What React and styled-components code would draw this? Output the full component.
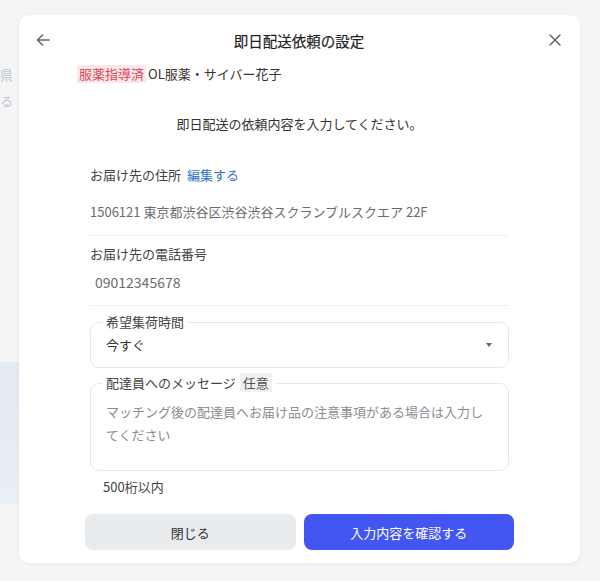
import React from 'react';
import styled, { createGlobalStyle } from 'styled-components';

const GlobalStyle = createGlobalStyle`
  body {
    margin: 0;
    background: #f4f5f7;
    font-family: "Noto Sans CJK JP", "Noto Sans", sans-serif;
    color: #333;
  }
`;

const Page = styled.div`
  position: relative;
  width: 600px;
  height: 581px;
  overflow: hidden;
  background: #f4f5f7;
`;

const Behind = styled.div`
  display: flex;
  flex-direction: column;
  padding-top: 66px;
  width: 40px;
  color: #c4c7cc;
  font-size: 13px;
  line-height: 18px;
`;

const BehindLine = styled.div`
  white-space: nowrap;
  margin-bottom: 8px;
`;

const BehindCard = styled.div`
  margin-top: 244px;
  width: 19px;
  height: 142px;
  background: linear-gradient(180deg, #e2ebf2, #e8eff5);
`;

const Modal = styled.div`
  position: absolute;
  left: 19px;
  top: 15px;
  width: 561px;
  height: 548px;
  background: #fff;
  border-radius: 10px;
  box-shadow: 0 1px 4px rgba(0, 0, 0, 0.06);
  display: flex;
  flex-direction: column;
`;

const Header = styled.div`
  height: 50px;
  display: grid;
  grid-template-columns: 1fr auto 1fr;
  align-items: center;
  padding: 0 18px 0 17px;
`;

const IconButton = styled.button`
  border: none;
  background: none;
  padding: 0;
  display: flex;
  justify-self: ${p => (p.$end ? 'end' : 'start')};
  color: #666;
`;

const Title = styled.h1`
  margin: 0;
  font-size: 14.5px;
  font-weight: 400;
  color: #1f1f1f;
  -webkit-text-stroke: 0.2px #1f1f1f;
`;

const PatientRow = styled.div`
  display: flex;
  align-items: center;
  padding-left: 58px;
  height: 18px;
  font-size: 13px;
  line-height: 18px;
  color: #333;
`;

const Tag = styled.span`
  background: #fde7e9;
  color: #d9485a;
  padding: 0 2px;
  margin-right: 2px;
`;

const Subtitle = styled.p`
  margin: 31px 0 0;
  text-align: center;
  font-size: 13px;
  line-height: 20px;
  color: #333;
`;

const Body = styled.div`
  display: flex;
  flex-direction: column;
  padding: 0 71px;
  margin-top: 31px;
`;

const Label = styled.div`
  font-size: 13px;
  line-height: 20px;
  color: #444;
`;

const EditLink = styled.a`
  color: #2f72c4;
  margin-left: 6px;
`;

const Value = styled.div`
  margin-top: ${p => p.$gap}px;
  padding-left: ${p => p.$indent || 0}px;
  font-size: ${p => p.$size || 13}px;
  line-height: 20px;
  color: #6b6b6b;
`;

const Divider = styled.hr`
  border: none;
  border-top: 1px solid #eef0f2;
  margin: 13px 0 ${p => p.$after}px;
`;

const Field = styled.fieldset`
  margin: 0;
  border: 1px solid #e6e8eb;
  border-radius: 9px;
  padding: 0 15px ${p => p.$bottom}px;
  margin-bottom: 6px;
  min-width: 0;
`;

const Legend = styled.legend`
  font-size: 13px;
  line-height: 18px;
  padding: 0 4px;
  margin-left: -4px;
  color: #444;
`;

const Optional = styled.span`
  background: #f0f1f3;
  color: #555;
  padding: 0 3px;
  margin-left: 4px;
`;

const SelectRow = styled.div`
  display: flex;
  align-items: center;
  justify-content: space-between;
  margin-top: 4px;
  font-size: 13px;
  line-height: 20px;
  color: #333;
`;

const Caret = styled.span`
  width: 0;
  height: 0;
  border-left: 3.5px solid transparent;
  border-right: 3.5px solid transparent;
  border-top: 4px solid #666;
  margin-right: 1px;
`;

const TextArea = styled.textarea`
  display: block;
  width: 100%;
  box-sizing: border-box;
  margin-top: 8px;
  height: 70px;
  border: none;
  outline: none;
  resize: none;
  padding: 0;
  font-family: inherit;
  font-size: 13px;
  line-height: 23px;
  color: #333;
  &::placeholder {
    color: #8a8d91;
  }
`;

const Counter = styled.div`
  padding-left: 13px;
  font-size: 13px;
  line-height: 20px;
  color: #444;
`;

const Actions = styled.div`
  display: grid;
  grid-template-columns: 1fr 1fr;
  gap: 8px;
  padding: 0 66px;
  margin-top: 17px;
`;

const Button = styled.button`
  height: 36px;
  border: none;
  border-radius: 8px;
  font-family: inherit;
  font-size: 13px;
  background: ${p => (p.$primary ? '#4456f2' : '#e9ecef')};
  color: ${p => (p.$primary ? '#fff' : '#333')};
`;

const ArrowLeft = () => (
  <svg width="14" height="14" viewBox="0 0 14 14" fill="none" stroke="currentColor" strokeWidth="1.5" strokeLinecap="round" strokeLinejoin="round">
    <path d="M13 7H1.5M6.5 2L1.5 7l5 5" />
  </svg>
);

const CloseIcon = () => (
  <svg width="14" height="14" viewBox="0 0 14 14" fill="none" stroke="currentColor" strokeWidth="1.5" strokeLinecap="round">
    <path d="M2 2l10 10M12 2L2 12" />
  </svg>
);

export default function App() {
  return (
    <Page>
      <GlobalStyle />
      <Behind>
        <BehindLine>県</BehindLine>
        <BehindLine>る（</BehindLine>
        <BehindCard />
      </Behind>
      <Modal>
        <Header>
          <IconButton aria-label="戻る"><ArrowLeft /></IconButton>
          <Title>即日配送依頼の設定</Title>
          <IconButton $end aria-label="閉じる"><CloseIcon /></IconButton>
        </Header>
        <PatientRow>
          <Tag>服薬指導済</Tag>OL服薬・サイバー花子
        </PatientRow>
        <Subtitle>即日配送の依頼内容を入力してください。</Subtitle>
        <Body>
          <Label>お届け先の住所<EditLink>編集する</EditLink></Label>
          <Value $gap={17}>1506121 東京都渋谷区渋谷渋谷スクランブルスクエア 22F</Value>
          <Divider $after={8} />
          <Label>お届け先の電話番号</Label>
          <Value $gap={8} $indent={5} $size={14}>09012345678</Value>
          <Divider $after={7} />
          <Field $bottom={12}>
            <Legend>希望集荷時間</Legend>
            <SelectRow>
              今すぐ
              <Caret />
            </SelectRow>
          </Field>
          <Field $bottom={0}>
            <Legend>配達員へのメッセージ<Optional>任意</Optional></Legend>
            <TextArea placeholder="マッチング後の配達員へお届け品の注意事項がある場合は入力してください" />
          </Field>
          <Counter>500桁以内</Counter>
        </Body>
        <Actions>
          <Button>閉じる</Button>
          <Button $primary>入力内容を確認する</Button>
        </Actions>
      </Modal>
    </Page>
  );
}
